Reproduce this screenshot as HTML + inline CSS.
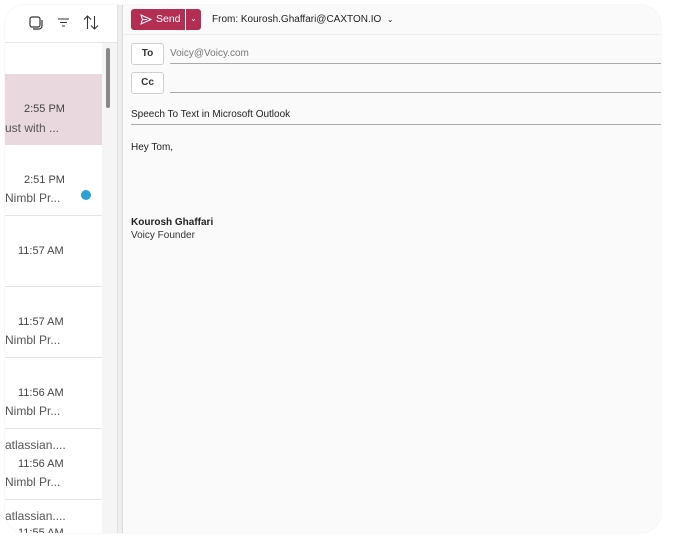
<!DOCTYPE html>
<html><head><style>
*{margin:0;padding:0;box-sizing:border-box}
html,body{width:678px;height:540px;overflow:hidden}
body{background:#fff;font-family:"Liberation Sans",sans-serif;position:relative}
.card{position:absolute;left:5px;top:5px;width:656px;height:528px;border-radius:20px;overflow:hidden;background:#fafafa;box-shadow:0 0 1px #ccc}
.list{position:absolute;left:0;top:0;width:97px;height:528px;background:#fff}
.hdr{position:absolute;left:0;top:0;width:112px;height:38px;background:#fff;border-bottom:1px solid #e6e6e6}
.row{position:absolute;left:0;width:97px;height:71px;border-bottom:1px solid #e4e4e4;color:#444;font-size:11px}
.s{position:absolute;left:0;font-size:12px;color:#555}
.strip{position:absolute;left:97px;top:38px;width:15px;height:490px;background:#f5f5f5}
.thumb{position:absolute;left:101px;top:43px;width:4px;height:60px;background:#888;border-radius:2px}
.div{position:absolute;left:112px;top:0;width:6px;height:528px;background:#eee;border-left:1px solid #e0e0e0;border-right:1px solid #dadada}
.comp{position:absolute;left:118px;top:0;right:0;bottom:0;background:#fafafa}
.btn{position:absolute;background:#fff;border:1px solid #d0d0d0;border-radius:3px;font-size:10px;font-weight:bold;color:#333;text-align:center;line-height:20px;width:33px;height:22px}
.line{position:absolute;left:165px;right:0;height:1px;background:#aaa}
</style></head><body>
<div class="card">
 <div class="list"></div>
 <div class="hdr">
  <svg style="position:absolute;left:24px;top:11px" width="14" height="14" viewBox="0 0 14 14" fill="none" stroke="#333" stroke-width="1.2"><rect x="1" y="1" width="10" height="10" rx="2"/><path d="M4 13h6a3 3 0 0 0 3-3V4"/></svg>
  <svg style="position:absolute;left:52px;top:12px" width="13" height="11" stroke="#333" stroke-width="1.1"><path d="M1 2h11M3 5.5h7M5 9h3"/></svg>
  <svg style="position:absolute;left:78px;top:10px" width="16" height="15" fill="none" stroke="#333" stroke-width="1.1"><path d="M4.5 14V1M1 4.5 4.5 1 8 4.5M11.5 1v13M8 10.5l3.5 3.5 3.5-3.5"/></svg>
 </div>
 <div class="row" style="top:69px;background:#e9d9df;border-bottom:none"><span style="position:absolute;left:19px;top:29px">2:55 PM</span><span class="s" style="top:47px">ust with ...</span></div>
 <div class="row" style="top:140px"><span style="position:absolute;left:19px;top:29px">2:51 PM</span><span class="s" style="top:46px">Nimbl Pr...</span><span style="position:absolute;left:76px;top:45px;width:10px;height:10px;border-radius:50%;background:#2e9fd9"></span></div>
 <div class="row" style="top:211px"><span style="position:absolute;left:13px;top:29px">11:57 AM</span></div>
 <div class="row" style="top:282px"><span style="position:absolute;left:13px;top:29px">11:57 AM</span><span class="s" style="top:46px">Nimbl Pr...</span></div>
 <div class="row" style="top:353px"><span style="position:absolute;left:13px;top:29px">11:56 AM</span><span class="s" style="top:46px">Nimbl Pr...</span></div>
 <div class="row" style="top:424px"><span class="s" style="top:9px">atlassian....</span><span style="position:absolute;left:13px;top:29px">11:56 AM</span><span class="s" style="top:46px">Nimbl Pr...</span></div>
 <div class="row" style="top:495px;height:33px;border:none"><span class="s" style="top:9px">atlassian....</span><span style="position:absolute;left:13px;top:27px">11:55 AM</span></div>
 <div class="strip"></div>
 <div class="thumb"></div>
 <div class="div"></div>
 <div class="comp"></div>
 <div style="position:absolute;left:118px;top:29px;right:0;height:1px;background:#eee"></div>
 <div style="position:absolute;left:126px;top:4px;width:54px;height:21px;background:#b42d52;border-radius:3px 0 0 3px;color:#fff;font-size:10.5px;line-height:21px">
  <svg style="position:absolute;left:9px;top:5px" width="12" height="11" fill="none" stroke="#fff" stroke-width="1"><path d="M1 1l10 4.5L1 10l1.5-4.5z M2.5 5.5H7"/></svg>
  <span style="position:absolute;left:25px">Send</span></div>
 <div style="position:absolute;left:181px;top:4px;width:15px;height:21px;background:#b42d52;border-radius:0 3px 3px 0;color:#fff;font-size:8px;text-align:center;line-height:20px">⌄</div>
 <div style="position:absolute;left:207px;top:9px;font-size:10px;color:#222">From: Kourosh.Ghaffari@CAXTON.IO &nbsp;<span style="font-size:8px">⌄</span></div>
 <div class="btn" style="left:126px;top:38px">To</div>
 <div style="position:absolute;left:165px;top:43px;font-size:10px;color:#777">Voicy@Voicy.com</div>
 <div class="line" style="top:58px"></div>
 <div class="btn" style="left:126px;top:67px">Cc</div>
 <div class="line" style="top:87px"></div>
 <div style="position:absolute;left:126px;top:104px;font-size:10px;color:#222">Speech To Text in Microsoft Outlook</div>
 <div class="line" style="top:119px;left:126px"></div>
 <div style="position:absolute;left:126px;top:137px;font-size:10px;color:#222">Hey Tom,</div>
 <div style="position:absolute;left:126px;top:212px;font-size:10px;color:#222;font-weight:bold">Kourosh Ghaffari</div>
 <div style="position:absolute;left:126px;top:225px;font-size:10px;color:#333">Voicy Founder</div>
</div>
</body></html>
